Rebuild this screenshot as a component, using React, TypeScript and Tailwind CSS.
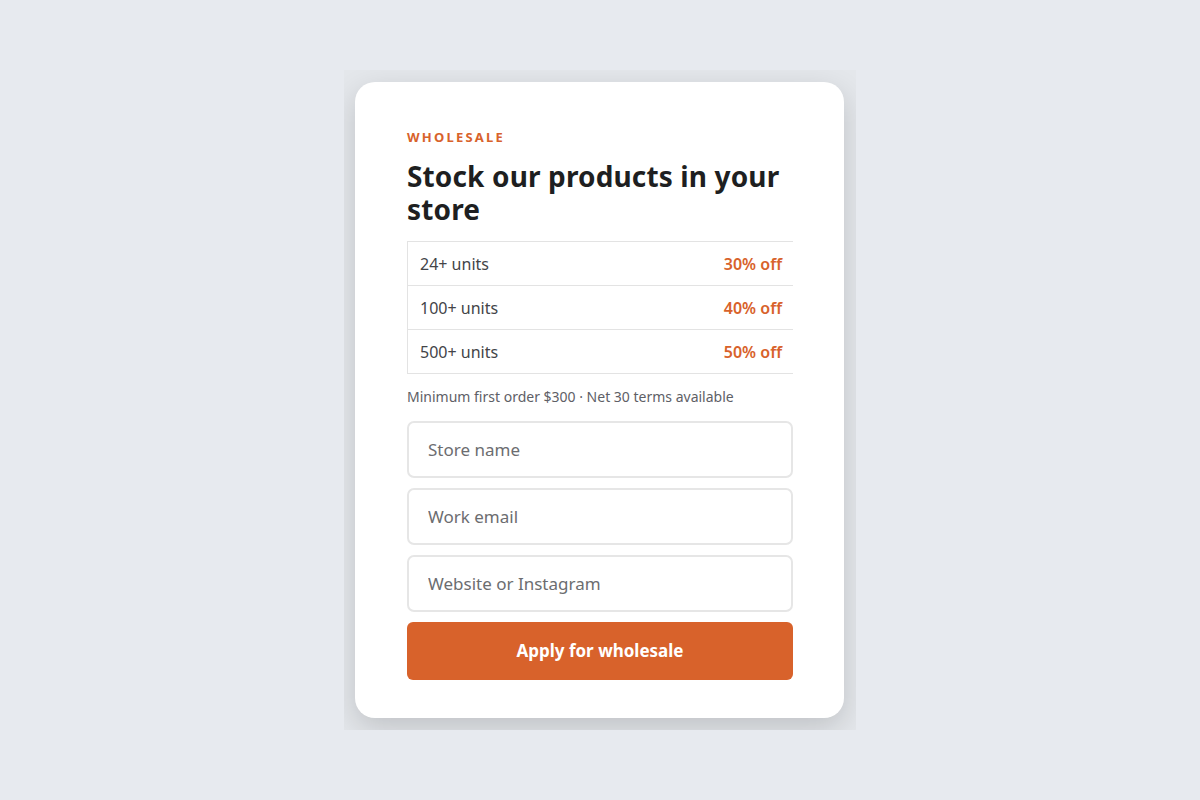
import React from "react";

const tiers = [
  { units: "24+ units", off: "30% off" },
  { units: "100+ units", off: "40% off" },
  { units: "500+ units", off: "50% off" },
];

export default function App() {
  return (
    <div
      className="min-h-screen w-full bg-[#e7eaef] flex justify-center pt-[70px]"
      style={{ fontFamily: '"Noto Sans", "Open Sans", sans-serif' }}
    >
      <div className="w-[512px] h-[660px] pl-[11px] pr-[12px] pt-[12px] overflow-hidden bg-[#e4e7eb]">
        <div className="bg-white rounded-[20px] pl-[52px] pr-[51px] pt-[46px] pb-[38px] shadow-[0_10px_30px_rgba(0,0,0,0.16)]">
          <p className="text-[13px] font-bold tracking-[0.17em] text-[#d8622b] leading-[18px]">
            WHOLESALE
          </p>
          <h1 className="mt-[14px] text-[28px] leading-[33px] font-bold text-[#1e1f21] tracking-[0.005em]">
            Stock our products in your store
          </h1>
          <div className="mt-[15px] border-l border-y border-[#e3e3e3]">
            {tiers.map((t, i) => (
              <div
                key={t.units}
                className={
                  "flex items-center justify-between h-[43px] pl-3 pr-[11px] " +
                  (i > 0 ? "border-t border-[#e3e3e3] h-[44px]" : "")
                }
              >
                <span className="text-[16px] text-[#434448]">{t.units}</span>
                <span className="text-[16px] font-semibold text-[#d8622b]">{t.off}</span>
              </div>
            ))}
          </div>
          <p className="mt-[14px] text-[14px] text-[#5e6066] leading-[18px]">
            Minimum first order $300 · Net 30 terms available
          </p>
          <form className="mt-[15px] flex flex-col gap-[10px]" onSubmit={(e) => e.preventDefault()}>
            {["Store name", "Work email", "Website or Instagram"].map((p) => (
              <input
                key={p}
                placeholder={p}
                className="h-[57px] w-full rounded-[7px] border-2 border-[#e6e6e6] px-[19px] text-[17px] text-[#1e1f21] placeholder:text-[#6c6d70] outline-none"
              />
            ))}
            <button
              type="submit"
              className="h-[58px] w-full rounded-[6px] bg-[#d8622b] text-white text-[17px] font-bold"
            >
              Apply for wholesale
            </button>
          </form>
        </div>
      </div>
    </div>
  );
}
